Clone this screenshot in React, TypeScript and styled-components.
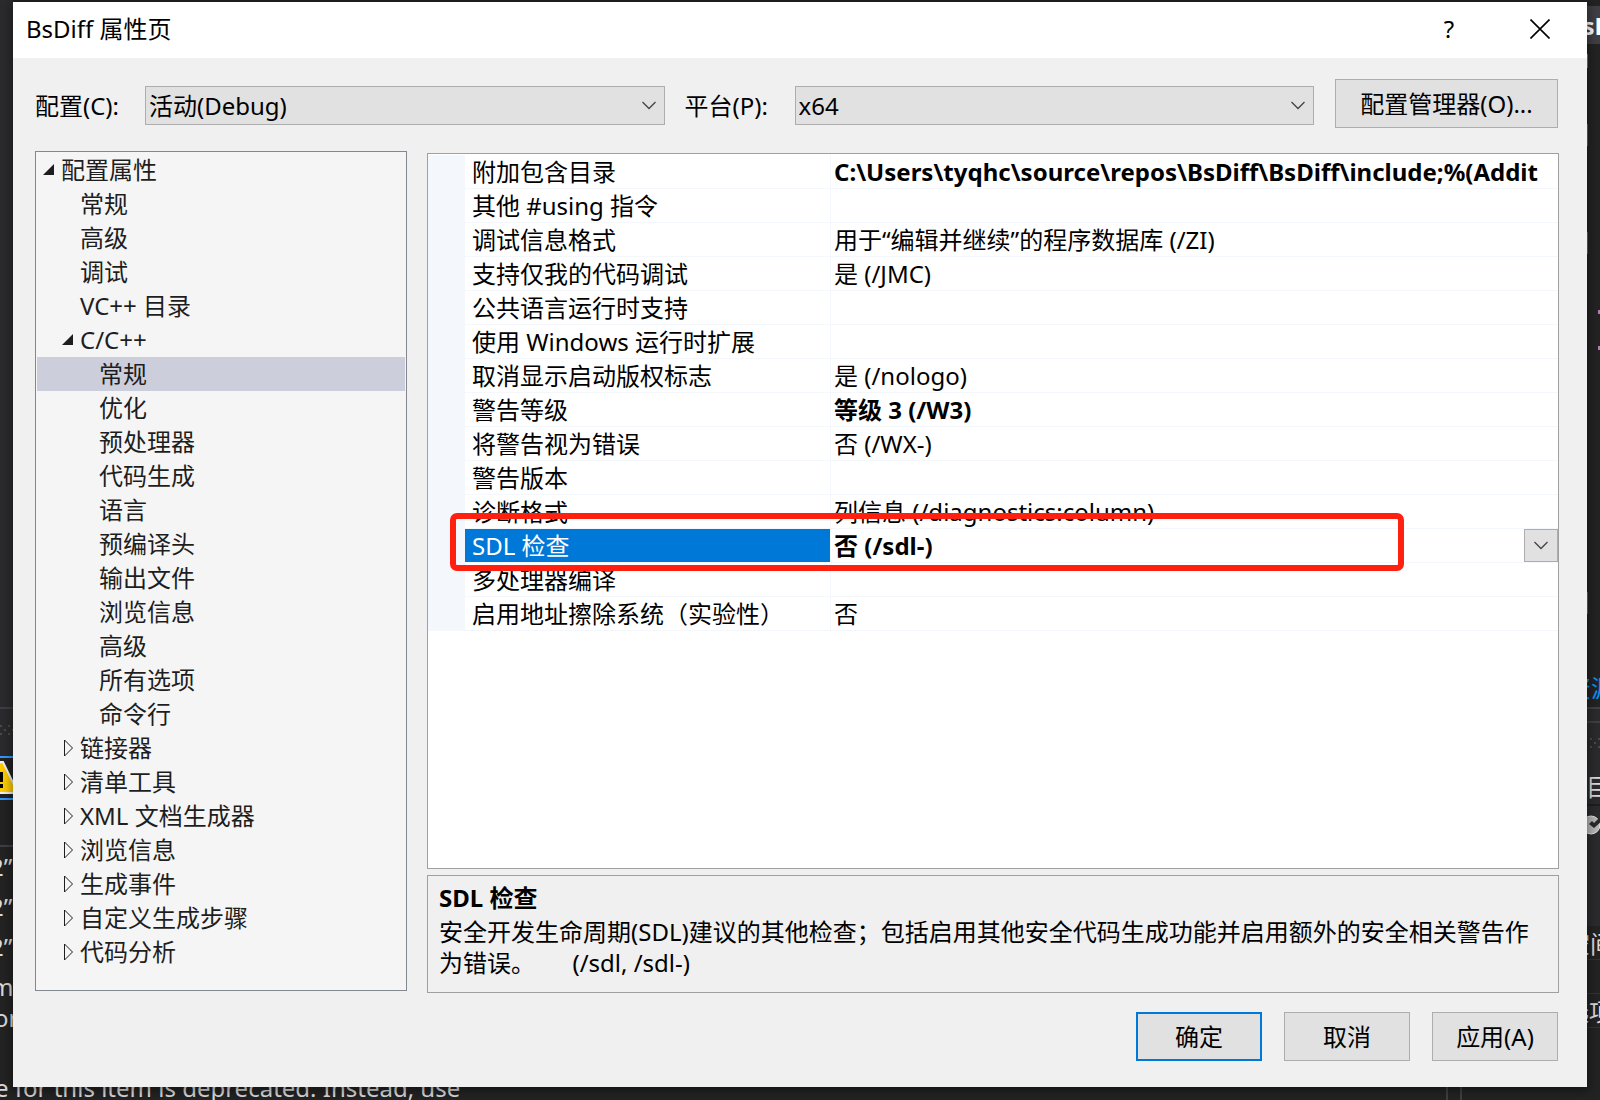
import React, { useState } from "react";
import styled, { createGlobalStyle, css } from "styled-components";

const uiFont = `"Noto Sans", "Open Sans", "Noto Sans CJK SC", sans-serif`;

const GlobalStyle = createGlobalStyle`
  * { box-sizing: border-box; }
  body {
    margin: 0;
    background: #252526;
    font-family: ${uiFont};
    font-size: 24px;
    line-height: 34px;
    color: #000;
  }
  button, select { font: inherit; color: inherit; }
`;

const Desktop = styled.div`
  position: relative;
  display: flex;
  min-height: 100vh;
  padding: 2px 13px 13px;
  overflow: hidden;
`;

/* ---------- editor window that lies behind the dialog ---------- */

const Backdrop = styled.div`
  position: absolute;
  inset: 0;
  overflow: hidden;
  background: #232323;
`;

type Spot = { $x: number; $y: number; $right?: boolean };

const spot = css<Spot>`
  position: absolute;
  top: ${(p) => p.$y}px;
  ${(p) => (p.$right ? `right: ${p.$x}px;` : `left: ${p.$x}px;`)}
`;

const Block = styled.div<Spot & { $w: number; $h: number; $color: string }>`
  ${spot}
  width: ${(p) => p.$w}px;
  height: ${(p) => p.$h}px;
  background: ${(p) => p.$color};
`;

const BackText = styled.span<Spot & { $color?: string; $bold?: boolean }>`
  ${spot}
  white-space: nowrap;
  color: ${(p) => p.$color ?? "#dcdcdc"};
  font-weight: ${(p) => (p.$bold ? 700 : 400)};
`;

const Drawing = styled.svg<Spot>`
  ${spot}
`;

/* ---------- dialog ---------- */

const Dialog = styled.section`
  position: relative;
  flex: 1;
  min-width: 0;
  display: flex;
  flex-direction: column;
  background: #f0f0f0;
  box-shadow: 0 2px 10px 2px rgba(0, 0, 0, 0.4);
`;

const TitleBar = styled.header`
  display: flex;
  align-items: center;
  height: 56px;
  padding: 0 28px 2px 13px;
  background: #fff;
`;

const Title = styled.h1`
  flex: 1;
  margin: 0;
  font-size: 24px;
  font-weight: 400;
`;

const CaptionButton = styled.button`
  display: flex;
  align-items: center;
  justify-content: center;
  width: 38px;
  height: 40px;
  margin-left: 53px;
  padding: 0;
  border: 0;
  background: transparent;
`;

const Body = styled.div`
  flex: 1;
  display: flex;
  flex-direction: column;
  padding: 21px 28px 26px 22px;
`;

const Toolbar = styled.div`
  display: flex;
  align-items: center;
  padding-right: 1px;
`;

const FieldLabel = styled.label`
  flex: none;
  width: 110px;
  padding-top: 4px;
`;

const SelectBox = styled.div<{ $gap: number }>`
  position: relative;
  flex: 1;
  min-width: 0;
  margin-top: 4px;
  margin-right: ${(p) => p.$gap}px;
`;

const Select = styled.select`
  display: block;
  appearance: none;
  width: 100%;
  height: 39px;
  padding: 0 40px 0 3px;
  border: 1px solid #adadad;
  border-radius: 0;
  background: #e1e1e1;
`;

const SelectArrow = styled.span`
  position: absolute;
  top: 0;
  right: 0;
  display: flex;
  align-items: center;
  justify-content: center;
  width: 32px;
  height: 100%;
  pointer-events: none;
`;

const PushButton = styled.button<{ $wide?: boolean; $primary?: boolean }>`
  flex: none;
  width: ${(p) => (p.$wide ? 223 : 126)}px;
  height: 49px;
  padding: 0;
  border: ${(p) => (p.$primary ? "2px solid #0078d7" : "1px solid #adadad")};
  background: #e1e1e1;
`;

const Main = styled.div`
  flex: 1;
  display: flex;
  gap: 20px;
  margin-top: 23px;
`;

const Tree = styled.ul`
  flex: none;
  width: 372px;
  margin: 0 0 2px;
  padding: 1px;
  list-style: none;
  border: 1px solid #828790;
  background: #f5f5f5;
`;

const TreeRow = styled.button<{ $level: number; $selected: boolean }>`
  display: flex;
  align-items: center;
  width: 100%;
  height: 34px;
  padding: 0 0 0 ${(p) => 5 + p.$level * 19}px;
  border: 0;
  background: ${(p) => (p.$selected ? "#cccedb" : "transparent")};
  color: #1e1e1e;
  white-space: nowrap;
`;

const TreeGlyph = styled.svg`
  flex: none;
  width: 14px;
  height: 18px;
  margin-right: 5px;
`;

const Right = styled.div`
  flex: 1;
  min-width: 0;
  display: flex;
  flex-direction: column;
  gap: 6px;
  margin-top: 2px;
`;

const GridPane = styled.div`
  flex: 1;
  padding-top: 1px;
  border: 1px solid #a0a0a0;
  background: #fff;
`;

const PropTable = styled.table`
  width: 100%;
  table-layout: fixed;
  border-collapse: separate;
  border-spacing: 0;
`;

const PropRow = styled.tr`
  position: relative;
  height: 34px;
`;

const Gutter = styled.td`
  width: 37px;
  padding: 0;
  background: #f4f7fc;
`;

const NameCell = styled.th<{ $selected: boolean }>`
  width: 366px;
  height: 34px;
  padding: 0 0 0 7px;
  border-right: 1px solid #f4f7fc;
  border-bottom: 1px solid #f4f7fc;
  background: ${(p) => (p.$selected ? "#0078d7" : "#fff")};
  background-clip: padding-box;
  color: ${(p) => (p.$selected ? "#fff" : "#000")};
  font-weight: 400;
  line-height: 33px;
  text-align: left;
  white-space: nowrap;
`;

const ValueCell = styled.td<{ $bold: boolean }>`
  height: 34px;
  padding: 0 0 0 3px;
  overflow: hidden;
  border-bottom: 1px solid #f4f7fc;
  font-weight: ${(p) => (p.$bold ? 700 : 400)};
  line-height: 33px;
  white-space: nowrap;
`;

const ValueEditor = styled.div`
  position: relative;
`;

const ValueSelect = styled.select`
  display: block;
  appearance: none;
  width: 100%;
  height: 33px;
  padding: 0;
  border: 0;
  background: transparent;
  line-height: 33px;
`;

const DropMark = styled.span`
  position: absolute;
  top: 0;
  right: 0;
  display: flex;
  align-items: center;
  justify-content: center;
  width: 34px;
  height: 33px;
  border: 1px solid #adadad;
  background: #e1e1e1;
  pointer-events: none;
`;

const Highlight = styled.span`
  position: absolute;
  z-index: 1;
  top: -16px;
  right: 154px;
  bottom: -8px;
  left: 22px;
  border: 6px solid #ff2010;
  border-radius: 7px;
  pointer-events: none;
`;

const Description = styled.section`
  min-height: 118px;
  padding: 4px 11px;
  border: 1px solid #a0a0a0;
`;

const DescTitle = styled.h2`
  margin: 0;
  font-size: 24px;
  line-height: 36px;
  font-weight: 700;
`;

const DescText = styled.p`
  margin: 0;
  line-height: 31px;
  white-space: pre-wrap;
`;

const Footer = styled.footer`
  display: flex;
  justify-content: flex-end;
  gap: 22px;
  margin-top: 19px;
  padding-right: 1px;
`;

const Chevron = () => (
  <svg width="14" height="9" viewBox="0 0 14 9" aria-hidden="true">
    <path d="M0.5 1L7 7.5L13.5 1" fill="none" stroke="#444" strokeWidth="1.3" />
  </svg>
);

type Node = { label: string; level: number; state?: "open" | "closed" };

const nodes: Node[] = [
  { label: "配置属性", level: 0, state: "open" },
  { label: "常规", level: 1 },
  { label: "高级", level: 1 },
  { label: "调试", level: 1 },
  { label: "VC++ 目录", level: 1 },
  { label: "C/C++", level: 1, state: "open" },
  { label: "常规", level: 2 },
  { label: "优化", level: 2 },
  { label: "预处理器", level: 2 },
  { label: "代码生成", level: 2 },
  { label: "语言", level: 2 },
  { label: "预编译头", level: 2 },
  { label: "输出文件", level: 2 },
  { label: "浏览信息", level: 2 },
  { label: "高级", level: 2 },
  { label: "所有选项", level: 2 },
  { label: "命令行", level: 2 },
  { label: "链接器", level: 1, state: "closed" },
  { label: "清单工具", level: 1, state: "closed" },
  { label: "XML 文档生成器", level: 1, state: "closed" },
  { label: "浏览信息", level: 1, state: "closed" },
  { label: "生成事件", level: 1, state: "closed" },
  { label: "自定义生成步骤", level: 1, state: "closed" },
  { label: "代码分析", level: 1, state: "closed" },
];

type Prop = { name: string; value: string; bold?: boolean; editing?: boolean };

const properties: Prop[] = [
  {
    name: "附加包含目录",
    value: "C:\\Users\\tyqhc\\source\\repos\\BsDiff\\BsDiff\\include;%(Addit",
    bold: true,
  },
  { name: "其他 #using 指令", value: "" },
  { name: "调试信息格式", value: "用于“编辑并继续”的程序数据库 (/ZI)" },
  { name: "支持仅我的代码调试", value: "是 (/JMC)" },
  { name: "公共语言运行时支持", value: "" },
  { name: "使用 Windows 运行时扩展", value: "" },
  { name: "取消显示启动版权标志", value: "是 (/nologo)" },
  { name: "警告等级", value: "等级 3 (/W3)", bold: true },
  { name: "将警告视为错误", value: "否 (/WX-)" },
  { name: "警告版本", value: "" },
  { name: "诊断格式", value: "列信息 (/diagnostics:column)" },
  { name: "SDL 检查", value: "否 (/sdl-)", bold: true, editing: true },
  { name: "多处理器编译", value: "" },
  { name: "启用地址擦除系统（实验性）", value: "否" },
];

const Glyph = ({ state }: { state?: "open" | "closed" }) => (
  <TreeGlyph viewBox="0 0 14 18" aria-hidden="true">
    {state === "open" && <path d="M12 3V14H1Z" fill="#1e1e1e" />}
    {state === "closed" && (
      <path d="M3.5 1V17L11.5 9Z" fill="none" stroke="#1e1e1e" strokeWidth="1" />
    )}
  </TreeGlyph>
);

const Dots = ({ x, y, right }: { x: number; y: number; right?: boolean }) => (
  <Drawing $x={x} $y={y} $right={right} width="14" height="12" aria-hidden="true">
    <path
      d="M0 1h2M8 1h2M4 5h2M12 5h2M0 9h2M8 9h2"
      stroke="#4a4a4e"
      strokeWidth="2"
    />
  </Drawing>
);

const EditorBehind = () => (
  <Backdrop aria-hidden="true">
    <Block $x={0} $y={0} $w={13} $h={756} $color="#2b2b2d" />
    <Block $x={0} $y={707} $w={13} $h={2} $color="#3f3f46" />
    <Dots x={0} y={725} />
    <Block $x={0} $y={756} $w={13} $h={2} $color="#3399ff" />
    <Drawing $x={-20} $y={761} width="40" height="34">
      <path d="M20 1H23L38 32H4Z" fill="#ffcc00" stroke="#f4f4f4" strokeWidth="2" />
      <path d="M20 11h3v10h-3zM20 23h3v4h-3z" fill="#000" />
    </Drawing>
    <Block $x={0} $y={798} $w={13} $h={2} $color="#3399ff" />
    <Block $x={0} $y={845} $w={13} $h={2} $color="#3f3f46" />
    <BackText $x={-10} $y={850}>2”</BackText>
    <BackText $x={-10} $y={890}>2”</BackText>
    <BackText $x={-10} $y={930}>2”</BackText>
    <BackText $x={-9} $y={970}>m</BackText>
    <BackText $x={-6} $y={1001}>or</BackText>
    <BackText $x={-5} $y={1071}>e for this item is deprecated. Instead, use</BackText>
    <Block $x={1446} $y={1087} $w={2} $h={13} $color="#3f3f46" />
    <Block $x={1460} $y={1087} $w={2} $h={13} $color="#3f3f46" />

    <Block $right $x={0} $y={6} $w={13} $h={38} $color="#3f3f46" />
    <BackText $right $x={-12} $y={9} $bold $color="#ffffff">sD</BackText>
    <Block $right $x={12} $y={54} $w={1} $h={14} $color="#777777" />
    <Block $right $x={12} $y={124} $w={1} $h={22} $color="#6b6048" />
    <Block $right $x={12} $y={232} $w={1} $h={22} $color="#6b6048" />
    <Block $right $x={0} $y={310} $w={2} $h={4} $color="#b77bb7" />
    <Block $right $x={0} $y={346} $w={2} $h={4} $color="#b77bb7" />
    <Block $right $x={12} $y={592} $w={1} $h={22} $color="#6b6048" />
    <BackText $right $x={-15} $y={671} $color="#0097fb">资源</BackText>
    <Block $right $x={0} $y={707} $w={13} $h={2} $color="#3f3f46" />
    <Block $right $x={0} $y={709} $w={13} $h={217} $color="#2b2b2d" />
    <Block $right $x={0} $y={721} $w={13} $h={2} $color="#3f3f46" />
    <Dots right x={-4} y={738} />
    <BackText $right $x={-10} $y={770}>目</BackText>
    <Block $right $x={0} $y={804} $w={13} $h={2} $color="#1e1e1e" />
    <Drawing $right $x={-4} $y={814} width="22" height="22">
      <circle cx="9" cy="11" r="9" fill="#b8b8b8" stroke="#e8e8e8" strokeWidth="1" />
      <path d="M7 10L10 7L12 9L17 4L20 7L12 14Z" fill="#2b2b2d" />
    </Drawing>
    <BackText $right $x={-14} $y={927}>空间</BackText>
    <Block $right $x={0} $y={959} $w={13} $h={1} $color="#333337" />
    <Block $right $x={0} $y={993} $w={13} $h={1} $color="#333337" />
    <BackText $right $x={-13} $y={995}>选项</BackText>
    <Block $right $x={0} $y={1027} $w={13} $h={1} $color="#333337" />
  </Backdrop>
);

export default function App() {
  const [selected, setSelected] = useState(6);

  return (
    <>
      <GlobalStyle />
      <Desktop>
        <EditorBehind />
        <Dialog role="dialog" aria-labelledby="dialog-title">
          <TitleBar>
            <Title id="dialog-title">BsDiff 属性页</Title>
            <CaptionButton type="button">?</CaptionButton>
            <CaptionButton type="button" aria-label="关闭">
              <svg width="20" height="20" viewBox="0 0 20 20" aria-hidden="true">
                <path d="M0.5 0.5L19.5 19.5M19.5 0.5L0.5 19.5" stroke="#000" strokeWidth="1.6" />
              </svg>
            </CaptionButton>
          </TitleBar>
          <Body>
            <Toolbar>
              <FieldLabel htmlFor="configuration">配置(C):</FieldLabel>
              <SelectBox $gap={20}>
                <Select id="configuration" defaultValue="debug">
                  <option value="debug">活动(Debug)</option>
                </Select>
                <SelectArrow><Chevron /></SelectArrow>
              </SelectBox>
              <FieldLabel htmlFor="platform">平台(P):</FieldLabel>
              <SelectBox $gap={21}>
                <Select id="platform" defaultValue="x64">
                  <option value="x64">x64</option>
                </Select>
                <SelectArrow><Chevron /></SelectArrow>
              </SelectBox>
              <PushButton type="button" $wide>配置管理器(O)...</PushButton>
            </Toolbar>

            <Main>
              <Tree>
                {nodes.map((node, i) => (
                  <li key={i}>
                    <TreeRow
                      type="button"
                      $level={node.level}
                      $selected={i === selected}
                      onClick={() => setSelected(i)}
                    >
                      <Glyph state={node.state} />
                      {node.label}
                    </TreeRow>
                  </li>
                ))}
              </Tree>

              <Right>
                <GridPane>
                  <PropTable>
                    <colgroup>
                      <col width="37" />
                      <col width="366" />
                      <col />
                    </colgroup>
                    <tbody>
                      {properties.map((p) => (
                        <PropRow key={p.name}>
                          <Gutter>{p.editing && <Highlight />}</Gutter>
                          <NameCell scope="row" $selected={!!p.editing}>{p.name}</NameCell>
                          <ValueCell $bold={!!p.bold}>
                            {p.editing ? (
                              <ValueEditor>
                                <ValueSelect aria-label={p.name} defaultValue={p.value}>
                                  <option value={p.value}>{p.value}</option>
                                </ValueSelect>
                                <DropMark><Chevron /></DropMark>
                              </ValueEditor>
                            ) : (
                              p.value
                            )}
                          </ValueCell>
                        </PropRow>
                      ))}
                    </tbody>
                  </PropTable>
                </GridPane>
                <Description>
                  <DescTitle>SDL 检查</DescTitle>
                  <DescText>
                    {"安全开发生命周期(SDL)建议的其他检查；包括启用其他安全代码生成功能并启用额外的安全相关警告作为错误。      (/sdl, /sdl-)"}
                  </DescText>
                </Description>
              </Right>
            </Main>

            <Footer>
              <PushButton type="button" $primary>确定</PushButton>
              <PushButton type="button">取消</PushButton>
              <PushButton type="button">应用(A)</PushButton>
            </Footer>
          </Body>
        </Dialog>
      </Desktop>
    </>
  );
}
